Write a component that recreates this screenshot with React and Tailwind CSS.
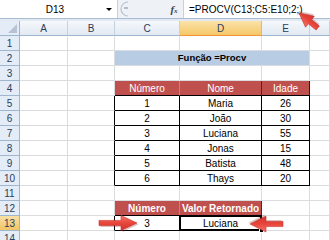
import React from "react";

const GRID = "border-r-[#dadcdd]";
const GRIDB = "border-b-[#dadcdd]";

// one spreadsheet cell, right and bottom lines act as the grid
const Cell = ({ w, r = GRID, b = GRIDB, className = "", children }) => (
  <div
    className={`${w} h-full shrink-0 flex items-center justify-center border-r border-b ${r} ${b} ${className}`}
  >
    {children}
  </div>
);

const RowHead = ({ n, active }) => (
  <Cell
    w="w-[20px]"
    r="border-r-[#9eb6ce]"
    b="border-b-[#9eb6ce]"
    className={
      active
        ? "bg-gradient-to-b from-[#f9e0a6] to-[#f2c462] text-[#2a3d5a]"
        : "bg-[#e4ecf7] text-[#2a3d5a]"
    }
  >
    {n}
  </Cell>
);

const people = [
  [1, "Maria", 26],
  [2, "João", 30],
  [3, "Luciana", 55],
  [4, "Jonas", 15],
  [5, "Batista", 48],
  [6, "Thays", 20],
];

const Row = ({ children }) => <div className="flex h-[15px]">{children}</div>;

const Empty = ({ n }) => (
  <Row>
    <RowHead n={n} />
    <Cell w="w-[48px]" />
    <Cell w="w-[47px]" />
    <Cell w="w-[65px]" />
    <Cell w="w-[82px]" />
    <Cell w="w-[48px]" />
    <Cell w="flex-1" />
  </Row>
);

const Arrow = ({ x, y, angle, len, head = 15, half = 7.5, shaft = 2.6 }) => (
  <g transform={`translate(${x} ${y}) rotate(${angle})`}>
    <polygon
      points={`1.5,1.5 ${-head + 1.5},${-half + 1.5} ${-head + 1.5},${-shaft + 1.5} ${-len + 1.5},${-shaft + 1.5} ${-len + 1.5},${shaft + 1.5} ${-head + 1.5},${shaft + 1.5} ${-head + 1.5},${half + 1.5}`}
      fill="#7a2020"
      opacity="0.25"
    />
    <polygon
      points={`0,0 ${-head},${-half} ${-head},${-shaft} ${-len},${-shaft} ${-len},${shaft} ${-head},${shaft} ${-head},${half}`}
      fill="url(#redArrow)"
      stroke="#c8302b"
      strokeWidth="0.6"
    />
  </g>
);

const HEAD = "bg-gradient-to-b from-[#f5f8fc] to-[#e2e9f2]";

export default function App() {
  return (
    <div className="relative w-[330px] h-[240px] overflow-hidden bg-white font-['Liberation_Sans',Arial,sans-serif] text-[10px] text-black">
      {/* formula bar */}
      <div className="flex h-[19px] border-b border-[#a9bcd3] bg-[#eef2f7]">
        <div className="w-[118px] flex items-center bg-white border-r border-[#c5d1df]">
          <span className="flex-1 text-center text-[10px] pl-[4px]">D13</span>
          <span className="w-0 h-0 mr-[5px] border-l-[3px] border-r-[3px] border-t-[3px] border-l-transparent border-r-transparent border-t-black" />
        </div>
        <div className="w-[47px] flex items-center pl-[2px]">
          <svg width="10" height="16" viewBox="0 0 10 16">
            <path d="M8 1 A7 7 0 0 0 8 15" fill="none" stroke="#b8c3d0" strokeWidth="1.2" />
            <path d="M4 7 h4" stroke="#9aa7b6" strokeWidth="1.4" />
          </svg>
        </div>
        <div className="w-[18px] flex items-center justify-center font-['Liberation_Serif',serif] italic font-bold text-[11px] text-[#3a4656]">
          f<span className="text-[7px] mt-[4px]">x</span>
        </div>
        <div className="flex-1 flex items-center bg-white border-l border-[#c5d1df] pl-[5px] text-[10px]">
          =PROCV(C13;C5:E10;2;)
        </div>
      </div>
      <div className="h-[2px] bg-[#e3e9f1]" />

      {/* column headers */}
      <div className="flex h-[15px] text-[#2a3d5a]">
        <Cell w="w-[20px]" r="border-r-[#9eb6ce]" b="border-b-[#9eb6ce]" className="bg-[#e4ecf7] items-end justify-end">
          <svg width="9" height="9" viewBox="0 0 9 9" className="mr-[2px] mb-[2px]">
            <polygon points="9,0 9,9 0,9" fill="#b7c3d2" />
          </svg>
        </Cell>
        <Cell w="w-[48px]" r="border-r-[#c5d1df]" b="border-b-[#9eb6ce]" className={HEAD}>A</Cell>
        <Cell w="w-[47px]" r="border-r-[#c5d1df]" b="border-b-[#9eb6ce]" className={HEAD}>B</Cell>
        <Cell w="w-[65px]" r="border-r-[#c5d1df]" b="border-b-[#9eb6ce]" className={HEAD}>C</Cell>
        <Cell w="w-[82px]" r="border-r-[#f0b94a]" b="border-b-[#f29536]" className="bg-gradient-to-b from-[#fbe3a9] to-[#f4c766]">D</Cell>
        <Cell w="w-[48px]" r="border-r-[#c5d1df]" b="border-b-[#9eb6ce]" className={HEAD}>E</Cell>
        <Cell w="flex-1" r="border-r-[#c5d1df]" b="border-b-[#9eb6ce]" className={HEAD} />
      </div>

      <Empty n={1} />
      <Row>
        <RowHead n={2} />
        <Cell w="w-[48px]" />
        <Cell w="w-[47px]" />
        <Cell w="w-[195px]" className="bg-[#b8cce4] font-bold text-[9.5px]">
          Função =Procv
        </Cell>
        <Cell w="flex-1" />
      </Row>
      <Empty n={3} />
      <Row>
        <RowHead n={4} />
        <Cell w="w-[48px]" />
        <Cell w="w-[47px]" />
        <Cell w="w-[65px]" r="border-r-[#d47a77]" b="border-b-black" className="bg-[#c0504d] text-white">Número</Cell>
        <Cell w="w-[82px]" r="border-r-[#5a2423]" b="border-b-black" className="bg-[#c0504d] text-white">Nome</Cell>
        <Cell w="w-[48px]" r="border-r-[#3a1a19]" b="border-b-black" className="bg-[#c0504d] text-white">Idade</Cell>
        <Cell w="flex-1" />
      </Row>
      {people.map(([num, name, age], i) => (
        <Row key={num}>
          <RowHead n={i + 5} />
          <Cell w="w-[48px]" />
          <Cell w="w-[47px]" r="border-r-black" />
          <Cell w="w-[65px]" r="border-r-black" b="border-b-black">{num}</Cell>
          <Cell w="w-[82px]" r="border-r-black" b="border-b-black">{name}</Cell>
          <Cell w="w-[48px]" r="border-r-black" b="border-b-black">{age}</Cell>
          <Cell w="flex-1" />
        </Row>
      ))}
      <Empty n={11} />
      <Row>
        <RowHead n={12} />
        <Cell w="w-[48px]" />
        <Cell w="w-[47px]" />
        <Cell w="w-[65px]" r="border-r-[#d47a77]" b="border-b-black" className="bg-[#c0504d] text-white font-bold">Número</Cell>
        <Cell w="w-[82px]" r="border-r-[#5a2423]" b="border-b-black" className="bg-[#c0504d] text-white font-bold">Valor Retornado</Cell>
        <Cell w="w-[48px]" />
        <Cell w="flex-1" />
      </Row>
      <Row>
        <RowHead n={13} active />
        <Cell w="w-[48px]" />
        <Cell w="w-[47px]" r="border-r-black" />
        <Cell w="w-[65px]" r="border-r-black" b="border-b-black">3</Cell>
        <Cell w="w-[82px]" r="border-r-black" b="border-b-black" className="relative">
          Luciana
          <div className="absolute -left-[1px] -top-[1px] -right-[1px] -bottom-[1px] border-2 border-black" />
          <div className="absolute -right-[3px] -bottom-[3px] w-[5px] h-[5px] bg-black border border-white" />
        </Cell>
        <Cell w="w-[48px]" />
        <Cell w="flex-1" />
      </Row>
      <Empty n={14} />

      {/* callout arrows */}
      <svg className="absolute left-0 top-0 pointer-events-none" width="330" height="240">
        <defs>
          <linearGradient id="redArrow" x1="0" y1="0" x2="0" y2="1">
            <stop offset="0" stopColor="#f4766c" />
            <stop offset="0.5" stopColor="#e8453b" />
            <stop offset="1" stopColor="#d3342c" />
          </linearGradient>
        </defs>
        <Arrow x={137} y={223} angle={0} len={38} head={16} half={7.5} />
        <Arrow x={250} y={224} angle={180} len={33} head={16} half={8} />
        <Arrow x={299} y={13} angle={218.7} len={24} head={14} half={7} />
      </svg>
    </div>
  );
}
